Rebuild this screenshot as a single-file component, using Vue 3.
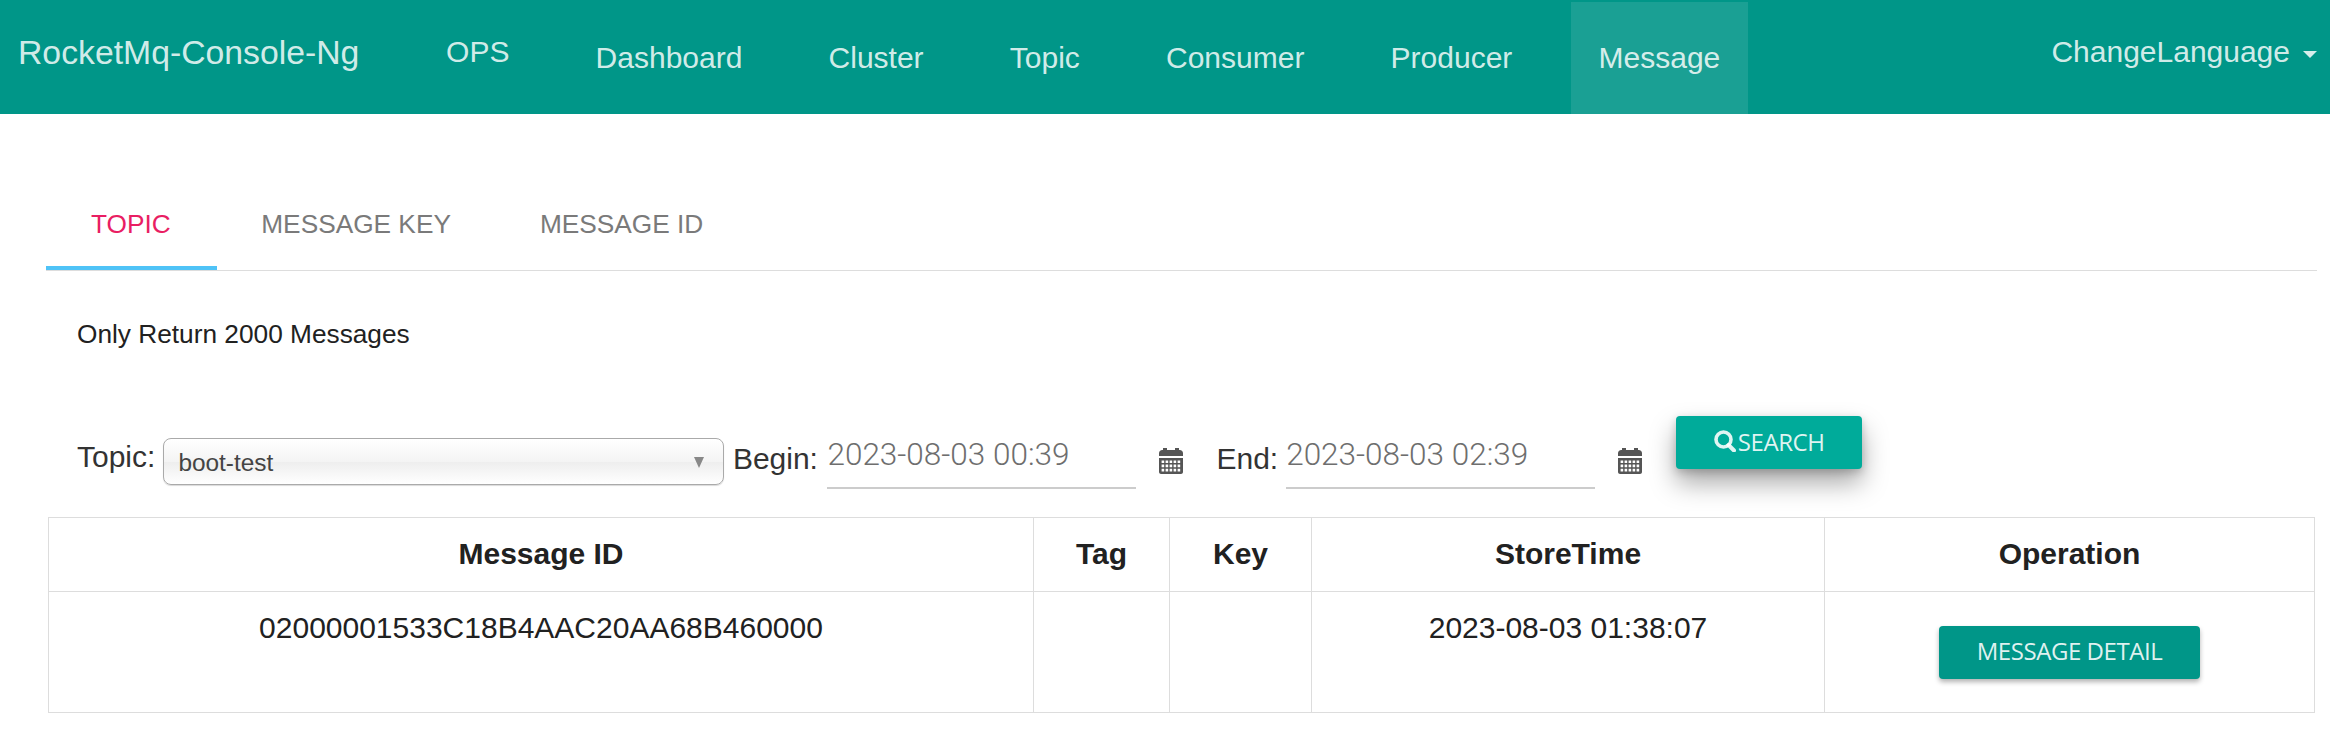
<template>
  <div class="page">
    <header class="navbar">
      <span class="brand">RocketMq-Console-Ng</span>
      <nav class="links">
        <a
          v-for="item in navItems"
          :key="item"
          class="link"
          :class="{ ops: item === 'OPS', active: item === 'Message' }"
        >{{ item }}</a>
      </nav>
      <a class="lang">ChangeLanguage<i class="caret"></i></a>
    </header>

    <main class="content">
      <div class="tabs">
        <a
          v-for="(tab, i) in tabs"
          :key="tab"
          class="tab"
          :class="{ current: i === 0 }"
        >{{ tab }}</a>
      </div>

      <p class="hint">Only Return 2000 Messages</p>

      <div class="form">
        <label class="label topic-label">Topic:</label>
        <div class="select">
          <span>boot-test</span>
          <i class="arrow"></i>
        </div>
        <label class="label begin-label">Begin:</label>
        <div class="date">2023-08-03 00:39</div>
        <svg class="cal" viewBox="0 0 24 26" fill="#555">
          <path d="M3 2h4V0h1v2h8V0h1v2h4c1 0 3 1 3 3v3H0V5c0-2 2-3 3-3z" />
          <path d="M4 0h4v3H4zM16 0h4v3h-4z" />
          <path fill-rule="evenodd" :d="calBody" />
        </svg>
        <label class="label end-label">End:</label>
        <div class="date">2023-08-03 02:39</div>
        <svg class="cal" viewBox="0 0 24 26" fill="#555">
          <path d="M3 2h4V0h1v2h8V0h1v2h4c1 0 3 1 3 3v3H0V5c0-2 2-3 3-3z" />
          <path d="M4 0h4v3H4zM16 0h4v3h-4z" />
          <path fill-rule="evenodd" :d="calBody" />
        </svg>
        <button class="search">
          <svg class="search-icon" viewBox="0 0 22 22" fill="none" stroke="currentColor">
            <circle cx="9.5" cy="9.5" r="7.5" stroke-width="3.6" />
            <path d="M14.5 15l5.5 5.5" stroke-width="4" stroke-linecap="round" />
          </svg>SEARCH
        </button>
      </div>

      <table class="grid">
        <colgroup>
          <col class="col-id" />
          <col class="col-tag" />
          <col class="col-key" />
          <col class="col-time" />
          <col />
        </colgroup>
        <thead>
          <tr>
            <th v-for="h in headers" :key="h">{{ h }}</th>
          </tr>
        </thead>
        <tbody>
          <tr>
            <td>02000001533C18B4AAC20AA68B460000</td>
            <td></td>
            <td></td>
            <td>2023-08-03 01:38:07</td>
            <td><button class="detail">MESSAGE DETAIL</button></td>
          </tr>
        </tbody>
      </table>
    </main>
  </div>
</template>

<script setup>
const navItems = ['OPS', 'Dashboard', 'Cluster', 'Topic', 'Consumer', 'Producer', 'Message']
const tabs = ['TOPIC', 'MESSAGE KEY', 'MESSAGE ID']
const headers = ['Message ID', 'Tag', 'Key', 'StoreTime', 'Operation']

// calendar body with its grid of little windows punched out
let body = 'M0 10h24v14c0 1-1 2-2 2H2c-1 0-2-1-2-2z'
for (let r = 0; r < 3; r++) {
  for (let c = 0; c < 5; c++) {
    const x = 2.6 + c * 4
    const y = 12.4 + r * 4.2
    body += `M${x} ${y}h2.6v2.6h-2.6z`
  }
}
const calBody = body
</script>

<style>
html, body {
  background: #fff;
}
</style>

<style scoped>
.page {
  width: 2330px;
  height: 729px;
  overflow: hidden;
  font-family: "Liberation Sans", Arial, sans-serif;
  color: #212121;
}

.navbar {
  height: 114px;
  background: #009688;
  color: rgba(255, 255, 255, 0.84);
  display: flex;
  align-items: flex-start;
  font-size: 30px;
}

.brand {
  margin: 32px 0 0 18px;
  font-size: 33.75px;
  line-height: 40px;
}

.links {
  display: flex;
  gap: 30.2px;
  margin-left: 58.7px;
  margin-top: 2px;
}

.link {
  padding: 0 28px;
  height: 112px;
  line-height: 112px;
}

.link.ops {
  line-height: 100px;
}

.link.active {
  background: rgba(255, 255, 255, 0.1);
}

.lang {
  margin-left: auto;
  margin-top: 32px;
  margin-right: 13px;
  line-height: 40px;
}

.caret {
  display: inline-block;
  margin-left: 13px;
  vertical-align: middle;
  border-top: 7.5px solid;
  border-left: 7.5px solid transparent;
  border-right: 7.5px solid transparent;
}

.content {
  padding: 60px 13px 0 46px;
}

.tabs {
  display: flex;
  border-bottom: 1px solid #ddd;
}

.tab {
  height: 96px;
  line-height: 101px;
  padding: 0 44.5px;
  font-size: 26.25px;
  color: #7a7a7a;
}

.tab.current {
  padding: 0 46px 0 45px;
  color: #e91e63;
  border-bottom: 4px solid #4fc3f7;
  box-sizing: border-box;
}

.hint {
  margin: 45.5px 0 0 31px;
  font-size: 26.25px;
  line-height: 35px;
}

.form {
  display: flex;
  align-items: flex-start;
  height: 101px;
  margin-top: 64px;
  color: #333;
}

.label {
  font-size: 30px;
  line-height: 40px;
}

.topic-label {
  margin: 21px 8px 0 31px;
}

.begin-label {
  margin: 23px 9.5px 0 8.5px;
}

.end-label {
  margin: 23px 8px 0 33px;
}

.select {
  position: relative;
  box-sizing: border-box;
  width: 561px;
  height: 47px;
  margin-top: 22px;
  padding-left: 14px;
  border: 1.5px solid #aaa;
  border-radius: 8px;
  background: linear-gradient(to bottom, #fff 0%, #f4f4f4 50%, #eee 52%, #fff 100%);
  box-shadow: 0 1px 1px rgba(0, 0, 0, 0.15);
  font-size: 24.4px;
  line-height: 47px;
  color: #444;
}

.arrow {
  position: absolute;
  top: 18px;
  right: 19px;
  border-top: 11px solid #888;
  border-left: 5.5px solid transparent;
  border-right: 5.5px solid transparent;
}

.date {
  box-sizing: border-box;
  width: 309px;
  height: 57px;
  margin-top: 16px;
  border-bottom: 2px solid #ccc;
  font-family: Roboto, sans-serif;
  font-weight: 300;
  font-size: 31.5px;
  line-height: 46px;
  color: #6e6e6e;
}

.cal {
  width: 24px;
  height: 26px;
  margin: 32px 0 0 23px;
}

.search {
  display: flex;
  align-items: center;
  justify-content: center;
  box-sizing: border-box;
  width: 186px;
  height: 53px;
  margin-left: 34px;
  padding: 0 0 2px;
  border: 0;
  border-radius: 4px;
  background: #00ab9a;
  color: rgba(255, 255, 255, 0.88);
  font-family: "Open Sans", sans-serif;
  font-size: 24px;
  letter-spacing: -0.4px;
  box-shadow: 0 14px 26px rgba(0, 0, 0, 0.34), 0 3px 8px rgba(0, 0, 0, 0.18);
}

.search-icon {
  width: 22px;
  height: 22px;
  margin-right: 2px;
}

.grid {
  width: 2267px;
  margin-left: 2px;
  border-collapse: collapse;
  table-layout: fixed;
  font-size: 30px;
}

.col-id { width: 985px; }
.col-tag { width: 136px; }
.col-key { width: 142px; }
.col-time { width: 513px; }

.grid th,
.grid td {
  border: 1.5px solid #ddd;
  text-align: center;
  vertical-align: top;
  padding: 0;
}

.grid th {
  height: 73px;
  line-height: 72px;
  font-weight: 700;
}

.grid td {
  height: 121px;
  padding-top: 18px;
  line-height: 36px;
  box-sizing: border-box;
}

.detail {
  display: block;
  box-sizing: border-box;
  width: 261px;
  height: 53px;
  margin: 16px auto 0;
  padding: 0 0 3px;
  border: 0;
  border-radius: 4px;
  background: #009688;
  color: rgba(255, 255, 255, 0.88);
  font-family: "Open Sans", sans-serif;
  font-size: 24px;
  letter-spacing: -0.45px;
  box-shadow: 0 3px 5px rgba(0, 0, 0, 0.3);
}
</style>
